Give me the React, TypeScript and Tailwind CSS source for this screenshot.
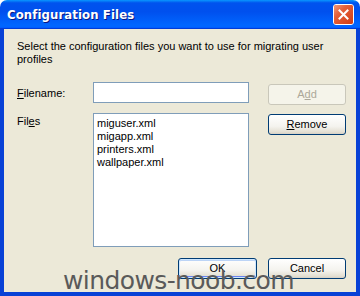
import React from "react";

const tahoma = "font-['Liberation_Sans','Noto_Sans',sans-serif]";

function Btn({ children, disabled, primary, className = "" }: { children: React.ReactNode; disabled?: boolean; primary?: boolean; className?: string }) {
    const base = disabled
        ? "border-[#c9c7ba] text-[#aca899] bg-[#f5f4ea]"
        : "border-[#003c74] text-black bg-[linear-gradient(to_bottom,#ffffff_0%,#f4f3ee_60%,#e3dfd2_90%,#d6d0c5_100%)]";
    const ring = primary ? "shadow-[inset_0_0_0_1px_#cee7ff,inset_0_-1px_0_1px_#6982ee,inset_0_1px_0_1px_#bcd4f6]" : "";
    return (
        <div className={`flex items-center justify-center rounded-[3px] border h-[21px] text-[11px] ${base} ${ring} ${className}`}>
            {children}
        </div>
    );
}

export default function App() {
    return (
        <div className={`w-[360px] h-[296px] bg-white ${tahoma}`}>
            <div className="flex flex-col w-full h-full rounded-t-[7px] overflow-hidden">
                {/* Title bar */}
                <div className="flex items-center justify-between h-[29px] pl-[7px] pr-[6px] bg-[linear-gradient(to_bottom,#0997ff_0%,#0053ee_10%,#0050ee_40%,#0066ff_86%,#0066ff_92%,#005bff_95%,#003dd7_97%,#003dd7_100%)]">
                    <span className="text-white font-bold text-[13px] tracking-[0.1px] [text-shadow:1px_1px_#0a1883] font-['DejaVu_Sans_Condensed','DejaVu_Sans',sans-serif]">
                        Configuration Files
                    </span>
                    <div className="flex items-center justify-center w-[21px] h-[21px] rounded-[3px] border border-white bg-[#e0572b]">
                        <div className="flex items-center justify-center w-full h-full rounded-[2px] bg-[linear-gradient(135deg,#f39a7c_0%,#e4603a_35%,#d23c13_100%)]">
                            <svg width="11" height="11" viewBox="0 0 11 11">
                                <path d="M1.5 1.5 L9.5 9.5 M9.5 1.5 L1.5 9.5" stroke="#ffffff" strokeWidth="2" strokeLinecap="square" />
                            </svg>
                        </div>
                    </div>
                </div>

                {/* Client area */}
                <div className="relative flex-1 flex flex-col bg-[#ece9d8] border-x-[4px] border-b-[4px] border-[#0841d6] pl-[13px] pr-[10px]">
                    <p className="mt-[11px] text-[11px] leading-[13px] text-black w-[310px]">
                        Select the configuration files you want to use for migrating user profiles
                    </p>

                    <div className="flex items-start mt-[16px]">
                        <span className="w-[76px] pt-[5px] text-[11px] leading-[13px]">
                            <u>F</u>ilename:
                        </span>
                        <div className="w-[156px] h-[21px] bg-white border border-[#7f9db9]" />
                        <Btn disabled className="ml-[19px] w-[78px] mt-[2px]">
                            A<u>d</u>d
                        </Btn>
                    </div>

                    <div className="flex items-start mt-[8px]">
                        <span className="w-[76px] pt-[2px] text-[11px] leading-[13px]">
                            Fil<u>e</u>s
                        </span>
                        <div className="flex flex-col w-[156px] h-[134px] bg-white border border-[#7f9db9] pl-[3px] pt-[3px] text-[11px] leading-[13px]">
                            <span>miguser.xml</span>
                            <span>migapp.xml</span>
                            <span>printers.xml</span>
                            <span>wallpaper.xml</span>
                        </div>
                        <Btn className="ml-[19px] w-[78px] mt-[1px]">
                            <u>R</u>emove
                        </Btn>
                    </div>

                    <div className="flex justify-end gap-[11px] mt-[11px]">
                        <Btn primary className="w-[79px]">OK</Btn>
                        <Btn className="w-[78px]">Cancel</Btn>
                    </div>

                    {/* watermark */}
                    <span className="absolute left-[59px] top-[239px] text-[25px] leading-[25px] tracking-[-0.6px] text-[#5a5a5a] font-['DejaVu_Sans',sans-serif] pointer-events-none">
                        windows-noob.com
                    </span>
                </div>
            </div>
        </div>
    );
}
